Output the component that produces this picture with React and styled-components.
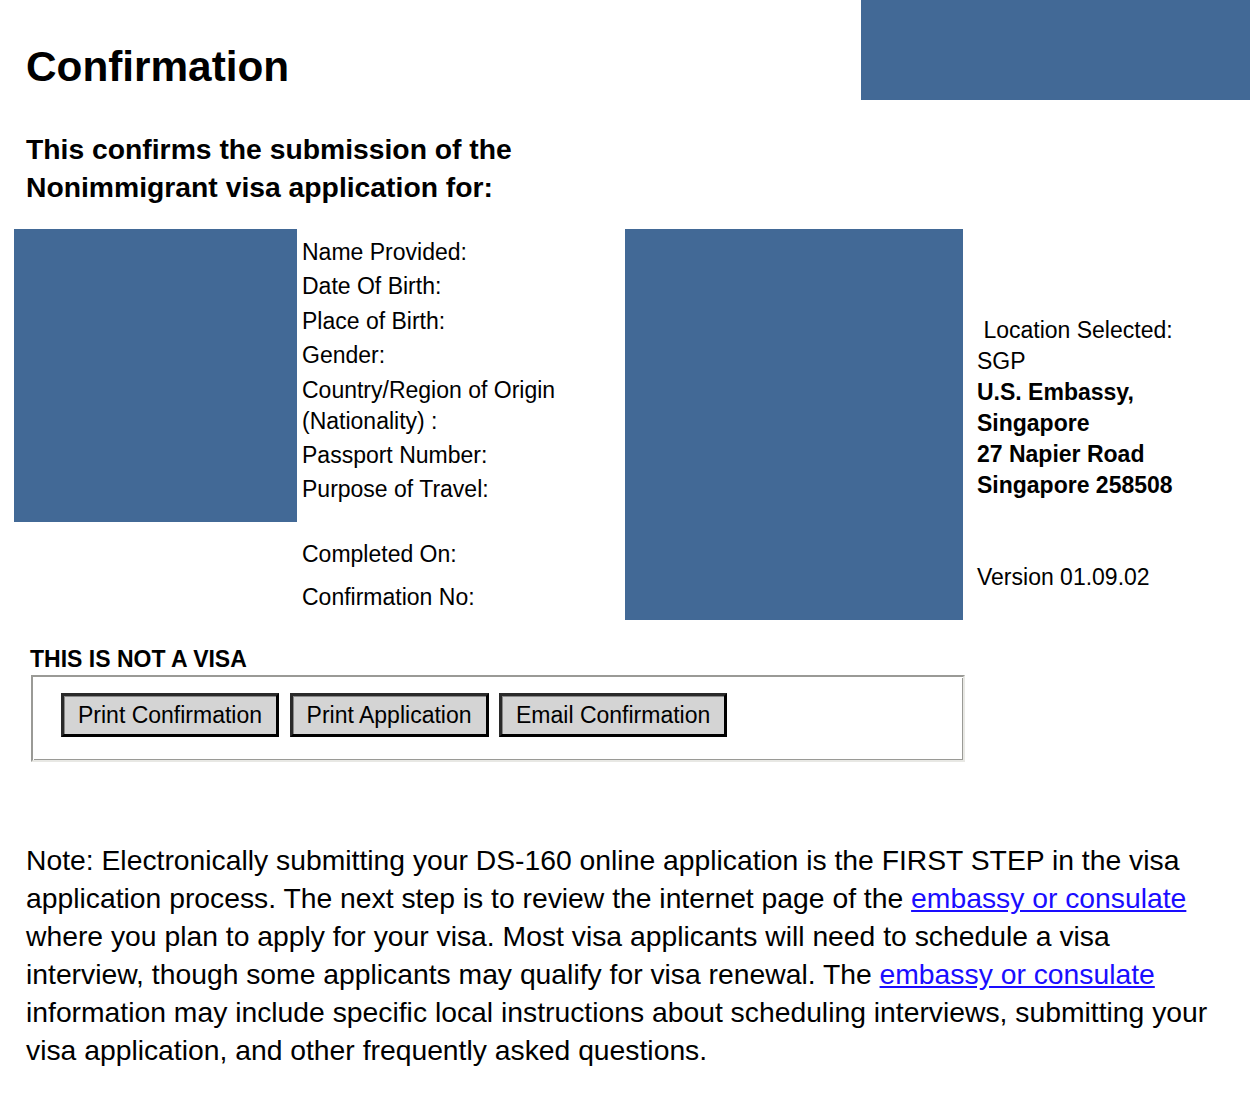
import React from "react";
import styled, { createGlobalStyle } from "styled-components";

const Global = createGlobalStyle`
  html, body { margin: 0; padding: 0; background: #fff; }
  body { font-family: "Liberation Sans", Arial, sans-serif; color: #000; }
`;

const REDACT = "#426996";

const Page = styled.div`
  width: 1250px;
  display: flex;
  flex-direction: column;
`;

const Header = styled.header`
  display: flex;
  justify-content: space-between;
  height: 100px;
`;

const Title = styled.h1`
  margin: 0;
  padding: 43px 0 0 26px;
  font-size: 42.3px;
  font-weight: 700;
  line-height: 48px;
`;

const Redacted = styled.div`
  background: ${REDACT};
  width: ${(p) => p.$w}px;
  height: ${(p) => p.$h}px;
  flex: none;
`;

const Subtitle = styled.h2`
  margin: 30px 0 0 26px;
  font-size: 28.3px;
  font-weight: 700;
  line-height: 38px;
  width: 520px;
`;

const Main = styled.section`
  display: flex;
  align-items: flex-start;
  margin: 23px 0 0 14px;
`;

const Labels = styled.div`
  width: 323px;
  margin-left: 5px;
  padding-top: 8px;
  display: flex;
  flex-direction: column;
  font-size: 23px;
  line-height: 31px;
`;

const Label = styled.div`
  margin-top: ${(p) => p.$gap ?? 3.4}px;
  &:first-child { margin-top: 0; }
`;

const Location = styled.div`
  margin: 86px 0 0 14px;
  display: flex;
  flex-direction: column;
  font-size: 23px;
  line-height: 31px;
`;

const Line = styled.div`
  font-weight: ${(p) => (p.$bold ? 700 : 400)};
  margin-top: ${(p) => p.$gap ?? 0}px;
  white-space: pre;
`;

const NotVisa = styled.div`
  margin: 26px 0 0 30px;
  font-size: 23px;
  font-weight: 700;
  line-height: 26px;
`;

const ButtonBox = styled.fieldset`
  margin: 3px 0 0 31px;
  width: 934px;
  height: 87px;
  box-sizing: border-box;
  border-width: 2px;
  border-style: solid;
  border-color: #9a9a96 #e8e8e4 #e8e8e4 #9a9a96;
  box-shadow: inset 1px 1px 0 #fff, inset -1px -1px 0 #9a9a96;
  padding: 16px 28px;
  display: flex;
  gap: 10.5px;
  align-items: flex-start;
`;

const Btn = styled.button`
  font-family: "Liberation Sans", Arial, sans-serif;
  font-size: 23px;
  height: 44px;
  padding: 0 14px;
  background: #d4d4d4;
  color: #000;
  border: 3px solid #111;
  border-color: #2a2a2a #000 #000 #2a2a2a;
  box-shadow: inset 1px 1px 0 #888;
  cursor: pointer;
`;

const Note = styled.p`
  margin: 79px 0 0 26px;
  width: 1192px;
  font-size: 28.3px;
  line-height: 38px;
`;

const Link = styled.a`
  color: #1a0dff;
  text-decoration: underline;
`;

export default function App() {
  return (
    <Page>
      <Global />
      <Header>
        <Title>Confirmation</Title>
        <Redacted $w={389} $h={100} />
      </Header>
      <Subtitle>This confirms the submission of the Nonimmigrant visa application for:</Subtitle>
      <Main>
        <Redacted $w={283} $h={293} />
        <Labels>
          <Label>Name Provided:</Label>
          <Label>Date Of Birth:</Label>
          <Label>Place of Birth:</Label>
          <Label>Gender:</Label>
          <Label>Country/Region of Origin (Nationality) :</Label>
          <Label>Passport Number:</Label>
          <Label>Purpose of Travel:</Label>
          <Label $gap={34}>Completed On:</Label>
          <Label $gap={12}>Confirmation No:</Label>
        </Labels>
        <Redacted $w={338} $h={391} />
        <Location>
          <Line>{" Location Selected:"}</Line>
          <Line>SGP</Line>
          <Line $bold>U.S. Embassy,</Line>
          <Line $bold>Singapore</Line>
          <Line $bold>27 Napier Road</Line>
          <Line $bold>Singapore 258508</Line>
          <Line $gap={61}>Version 01.09.02</Line>
        </Location>
      </Main>
      <NotVisa>THIS IS NOT A VISA</NotVisa>
      <ButtonBox>
        <Btn>Print Confirmation</Btn>
        <Btn>Print Application</Btn>
        <Btn>Email Confirmation</Btn>
      </ButtonBox>
      <Note>
        Note: Electronically submitting your DS-160 online application is the FIRST STEP in the visa
        application process. The next step is to review the internet page of the{" "}
        <Link href="#">embassy or consulate</Link> where you plan to apply for your visa. Most visa
        applicants will need to schedule a visa interview, though some applicants may qualify for visa
        renewal. The <Link href="#">embassy or consulate</Link> information may include specific local
        instructions about scheduling interviews, submitting your visa application, and other
        frequently asked questions.
      </Note>
    </Page>
  );
}
